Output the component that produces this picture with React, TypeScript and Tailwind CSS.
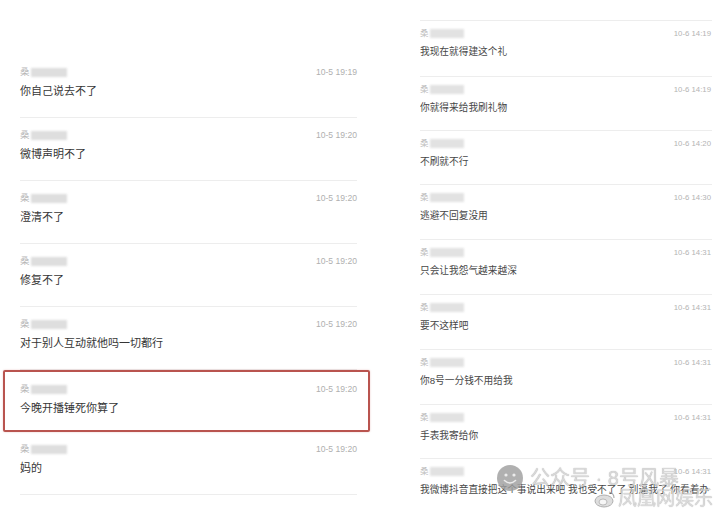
import React from "react";

const font = "font-['Liberation_Sans','Noto_Sans_CJK_SC',sans-serif]";

const leftRows = [
  { msg: "你自己说去不了", time: "10-5 19:19" },
  { msg: "微博声明不了", time: "10-5 19:20" },
  { msg: "澄清不了", time: "10-5 19:20" },
  { msg: "修复不了", time: "10-5 19:20" },
  { msg: "对于别人互动就他吗一切都行", time: "10-5 19:20" },
];

const rightRows = [
  { msg: "我现在就得建这个礼", time: "10-6 14:19", h: "h-[56px]" },
  { msg: "你就得来给我刷礼物", time: "10-6 14:19", h: "h-[54px]" },
  { msg: "不刷就不行", time: "10-6 14:20", h: "h-[54px]" },
  { msg: "逃避不回复没用", time: "10-6 14:30", h: "h-[55px]" },
  { msg: "只会让我怨气越来越深", time: "10-6 14:31", h: "h-[55px]" },
  { msg: "要不这样吧", time: "10-6 14:31", h: "h-[55px]" },
  { msg: "你8号一分钱不用给我", time: "10-6 14:31", h: "h-[55px]" },
  { msg: "手表我寄给你", time: "10-6 14:31", h: "h-[54px]" },
  { msg: "我微博抖音直接把这个事说出来吧 我也受不了了 别逼我了 你看着办", time: "10-6 14:31", h: "h-[56px]" },
];

function Name({ small }: { small?: boolean }) {
  return (
    <div className="flex items-center">
      <span className={small ? "text-[8.5px] leading-none text-[#bbbbbb]" : "text-[9.5px] leading-none text-[#b8b8b8]"}>
        桑
      </span>
      <span className={small ? "ml-[1px] w-[34px] h-[9px] bg-[#e2e2e2] blur-[1px]" : "ml-[1px] w-[36px] h-[9px] bg-[#dedede] blur-[1px]"} />
    </div>
  );
}

function LeftRowBody({ msg, time }: { msg: string; time: string }) {
  return (
    <div className="flex flex-col gap-[4px]">
      <div className="flex justify-between items-center h-[12px]">
        <Name />
        <span className="text-[8.6px] leading-none text-[#b0b0b0]">{time}</span>
      </div>
      <div className="h-[18px] text-[11px] leading-[18px] text-[#363636]">{msg}</div>
    </div>
  );
}

export default function App() {
  return (
    <div className={`relative w-[720px] h-[513px] bg-white flex overflow-hidden ${font}`}>
      {/* left screenshot */}
      <div className="w-[395px] pt-[55px]">
        {leftRows.map((r, i) => (
          <div key={i} className="ml-[20px] w-[337px] h-[63px] pt-[11px] border-b border-[#ededed]">
            <LeftRowBody msg={r.msg} time={r.time} />
          </div>
        ))}
        <div className="ml-[3px] w-[367px] h-[62px] border-2 border-[#b9544f] rounded-[2px] pl-[15px] pr-[11px] pt-[11px] shadow-[0_0_2px_rgba(185,84,79,0.35)]">
          <LeftRowBody msg="今晚开播锤死你算了" time="10-5 19:20" />
        </div>
        <div className="ml-[20px] w-[337px] h-[63px] pt-[11px] border-b border-[#ededed]">
          <LeftRowBody msg="妈的" time="10-5 19:20" />
        </div>
      </div>

      {/* right screenshot */}
      <div className="pt-[20px] pl-[25px]">
        {rightRows.map((r, i) => (
          <div key={i} className={`w-[292px] ${r.h} border-t border-[#ededed] pt-[7px] flex flex-col gap-[5px]`}>
            <div className="flex justify-between items-center h-[11px] pr-[1px]">
              <Name small />
              <span className="text-[7.8px] leading-none text-[#b4b4b4]">{r.time}</span>
            </div>
            <div className="h-[16px] text-[9.7px] leading-[16px] text-[#474747] whitespace-nowrap overflow-hidden">
              {r.msg}
            </div>
          </div>
        ))}
      </div>

      {/* watermark */}
      <div className="absolute left-[496px] top-[464px] flex items-center gap-[6px] opacity-80">
        <svg width="28" height="28" viewBox="0 0 28 28">
          <circle cx="14" cy="14" r="13" fill="#9d9d9d" />
          <circle cx="10" cy="11" r="1.6" fill="#e8e8e8" />
          <circle cx="18" cy="11" r="1.6" fill="#e8e8e8" />
          <path d="M8.5 16.5 Q14 21.5 19.5 16.5" stroke="#e8e8e8" strokeWidth="1.6" fill="none" strokeLinecap="round" />
        </svg>
        <span className="text-[20px] leading-none text-[#cfcfcf] [text-shadow:0_0_1px_#8f8f8f]">
          公众号 · 8号风暴
        </span>
      </div>
      <div className="absolute left-[594px] top-[489px] flex items-center gap-[2px] opacity-80">
        <svg width="22" height="18" viewBox="0 0 22 18">
          <ellipse cx="10" cy="11" rx="9" ry="6" fill="#d6d6d6" stroke="#9a9a9a" strokeWidth="1" />
          <ellipse cx="9" cy="12" rx="4" ry="3" fill="#f4f4f4" stroke="#9a9a9a" strokeWidth="0.8" />
          <path d="M15 2 Q20 3 20 8" stroke="#9a9a9a" strokeWidth="1.2" fill="none" />
        </svg>
        <span className="text-[19px] leading-none text-[#d2d2d2] [text-shadow:0_0_1px_#8f8f8f]">凤凰网娱乐</span>
      </div>
    </div>
  );
}
